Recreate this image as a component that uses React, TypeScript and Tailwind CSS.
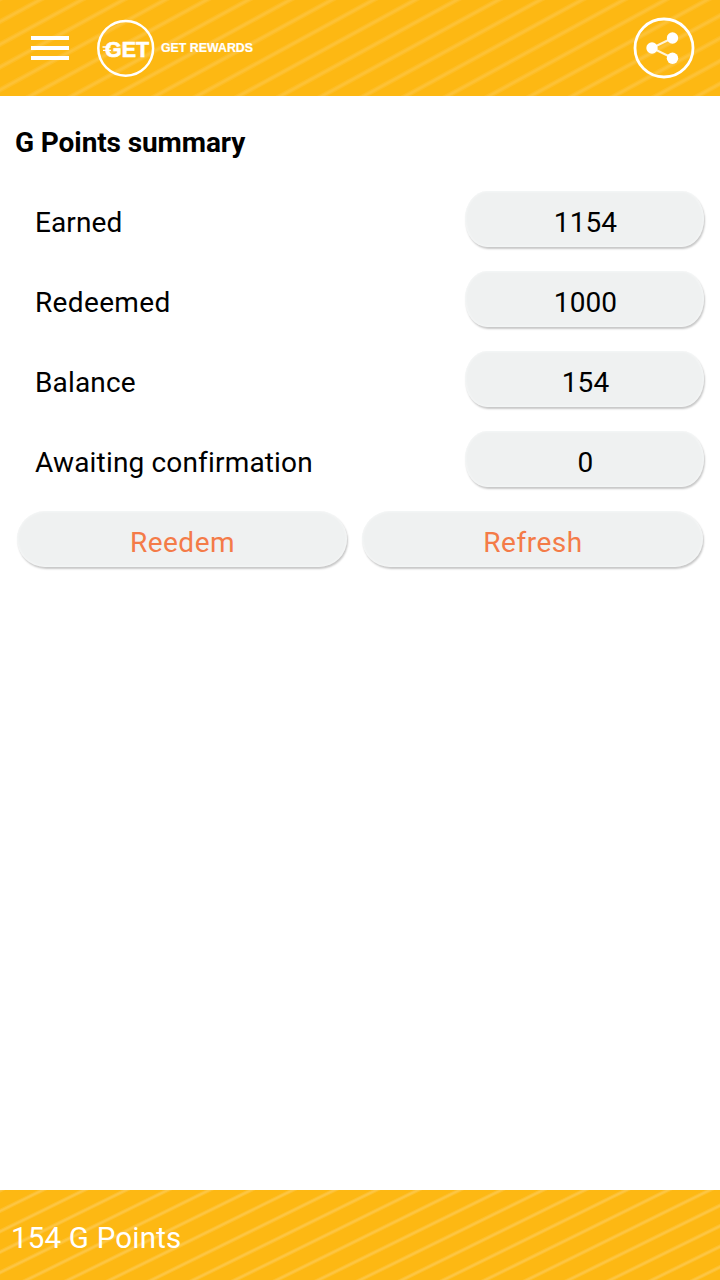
import type { ReactNode } from "react";

const ROWS = [
  { label: "Earned", value: "1154", tracking: "tracking-[0.1px]" },
  { label: "Redeemed", value: "1000", tracking: "tracking-[0.35px]" },
  { label: "Balance", value: "154", tracking: "tracking-[0.15px]" },
  { label: "Awaiting confirmation", value: "0", tracking: "tracking-[0.17px]" },
];

const STRIPE_GAP = 41.7;

type StripedBarProps = {
  height: number;
  offset: number;
  slope: number;
  strokeWidth: number;
  strokeOpacity: number;
  className: string;
  children: ReactNode;
};

function StripedBar({ height, offset, slope, strokeWidth, strokeOpacity, className, children }: StripedBarProps) {
  const run = height / slope;
  const stripes = Array.from({ length: 24 }, (_, i) => offset + i * STRIPE_GAP);

  return (
    <div className={`relative w-full shrink-0 bg-[#fdb813] ${className}`}>
      <svg className="absolute inset-0" width="720" height={height} aria-hidden="true">
        {stripes.map((x) => (
          <g key={x} stroke="#fff" strokeOpacity={strokeOpacity}>
            <line x1={x + 20} y1={-20 * slope} x2={x - run - 20} y2={height + 20 * slope} strokeWidth={strokeWidth} />
            <line x1={x + 20} y1={-20 * slope} x2={x - run - 20} y2={height + 20 * slope} strokeWidth={strokeWidth / 2} />
          </g>
        ))}
      </svg>
      <div className="relative flex h-full items-center">{children}</div>
    </div>
  );
}

function Logo() {
  return (
    <svg width="160" height="60" viewBox="0 0 160 60" fill="#fff" fontFamily="Liberation Sans, sans-serif" fontWeight="700">
      <circle cx="29.7" cy="30.3" r="27.4" fill="none" stroke="#fff" strokeWidth="2.5" />
      <text x="9" y="39" fontSize="22.5" textLength="44" lengthAdjust="spacingAndGlyphs" stroke="#fff" strokeWidth="0.7">GET</text>
      <path d="M6.5 29h8M7 32.4h8" stroke="#fff" strokeWidth="1.4" />
      <text x="65" y="33.8" fontSize="12" textLength="92" lengthAdjust="spacingAndGlyphs" stroke="#fff" strokeWidth="0.2">GET REWARDS</text>
    </svg>
  );
}

function ShareIcon() {
  return (
    <svg width="62" height="62" viewBox="0 0 62 62" fill="#fff">
      <circle cx="31" cy="31" r="29" fill="none" stroke="#fff" strokeWidth="2.8" />
      <path d="M39.5 21 19 31l20.5 10" fill="none" stroke="#fff" strokeOpacity="0.85" strokeWidth="2" />
      <circle cx="19" cy="31" r="5.7" />
      <circle cx="39.5" cy="21" r="5.7" />
      <circle cx="39.5" cy="41.3" r="5.7" />
    </svg>
  );
}

export default function App() {
  return (
    <div className="flex h-[1280px] w-[720px] flex-col overflow-hidden bg-white font-[Roboto,sans-serif] text-[28px] leading-8 text-black">
      {/* Header */}
      <StripedBar height={96} offset={-2} slope={0.545} strokeWidth={5} strokeOpacity={0.08} className="h-24">
        <button className="ml-[31px] flex w-[38px] flex-col gap-[6px]" aria-label="Menu">
          <span className="h-1 w-full bg-white" />
          <span className="h-1 w-full bg-white" />
          <span className="h-1 w-full bg-white" />
        </button>
        <div className="ml-[27px]">
          <Logo />
        </div>
        <button className="mr-[25px] ml-auto" aria-label="Share">
          <ShareIcon />
        </button>
      </StripedBar>

      {/* Summary */}
      <main className="flex-1 px-[15px] pt-[31px]">
        <h1 className="font-bold tracking-[-0.1px]">G Points summary</h1>
        <div className="mt-8 space-y-5">
          {ROWS.map((row) => (
            <div key={row.label} className="flex h-[60px] items-start justify-between pl-5">
              <span className={`pt-4 ${row.tracking}`}>{row.label}</span>
              <span className="mr-px h-[56px] w-[239px] rounded-[22px/28px] bg-[#eff1f1] pt-4 pl-0.5 text-center tracking-[0.1px] shadow-[1px_2px_2px_#c8c8c8,inset_0_0_3px_#fafbfb]">
                {row.value}
              </span>
            </div>
          ))}
        </div>
        <div className="mt-5 flex h-[60px] items-start gap-[15px] pl-[2px] text-[#f47b48]">
          <button className="h-[56px] w-[330px] rounded-[28px] bg-[#eff1f1] pt-[7px] pl-px tracking-[0.5px] shadow-[1px_2px_2px_#c8c8c8,inset_0_0_3px_#fafbfb]">Reedem</button>
          <button className="h-[56px] w-[341px] rounded-[28px] bg-[#eff1f1] pt-[7px] pl-px tracking-[0.5px] shadow-[1px_2px_2px_#c8c8c8,inset_0_0_3px_#fafbfb]">Refresh</button>
        </div>
      </main>

      {/* Balance footer */}
      <StripedBar height={90} offset={1} slope={0.492} strokeWidth={4} strokeOpacity={0.11} className="h-[90px]">
        <span className="pt-[6px] pl-[11px] text-[29.5px] tracking-[0.2px] text-white">154 G Points</span>
      </StripedBar>
    </div>
  );
}
